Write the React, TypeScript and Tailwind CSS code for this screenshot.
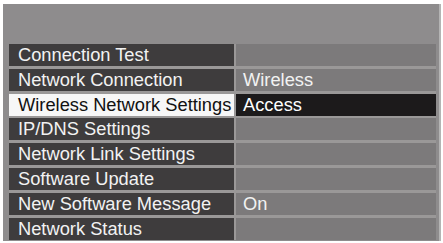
const rows = [
  { label: "Connection Test", value: "" },
  { label: "Network Connection", value: "Wireless" },
  { label: "Wireless Network Settings", value: "Access", active: true },
  { label: "IP/DNS Settings", value: "" },
  { label: "Network Link Settings", value: "" },
  { label: "Software Update", value: "" },
  { label: "New Software Message", value: "On" },
  { label: "Network Status", value: "" },
];

export default function App() {
  return (
    <div
      className="w-[443px] h-[243px] bg-white pt-[4px] pl-[3px]"
      style={{ fontFamily: '"Liberation Sans", Arial, sans-serif' }}
    >
      <div className="w-[438px] h-[237px] bg-[#8e8c8d] border-r-2 border-[#b4b4b4] pt-[40px] pl-[6px] pr-[3px]">
        <div className="flex flex-col gap-[2.8px] bg-[#9a9898]">
          {rows.map((r) => (
            <div key={r.label} className="flex h-[22px] gap-[2px]">
              <div
                className={
                  r.active
                    ? "w-[225px] bg-[#f7f7f7] text-[#111] text-[18.3px] leading-[22px] pl-[9px] whitespace-nowrap"
                    : "w-[225px] bg-[#3e3c3d] text-[#f2f2f2] text-[18.3px] leading-[22px] pl-[9px] whitespace-nowrap"
                }
              >
                {r.label}
              </div>
              <div
                className={
                  r.active
                    ? "flex-1 bg-[#1c1a1b] text-white text-[18.3px] leading-[22px] pl-[7px]"
                    : "flex-1 bg-[#7c7a7b] text-[#f2f2f2] text-[18.3px] leading-[22px] pl-[7px]"
                }
              >
                {r.value}
              </div>
            </div>
          ))}
        </div>
      </div>
    </div>
  );
}
